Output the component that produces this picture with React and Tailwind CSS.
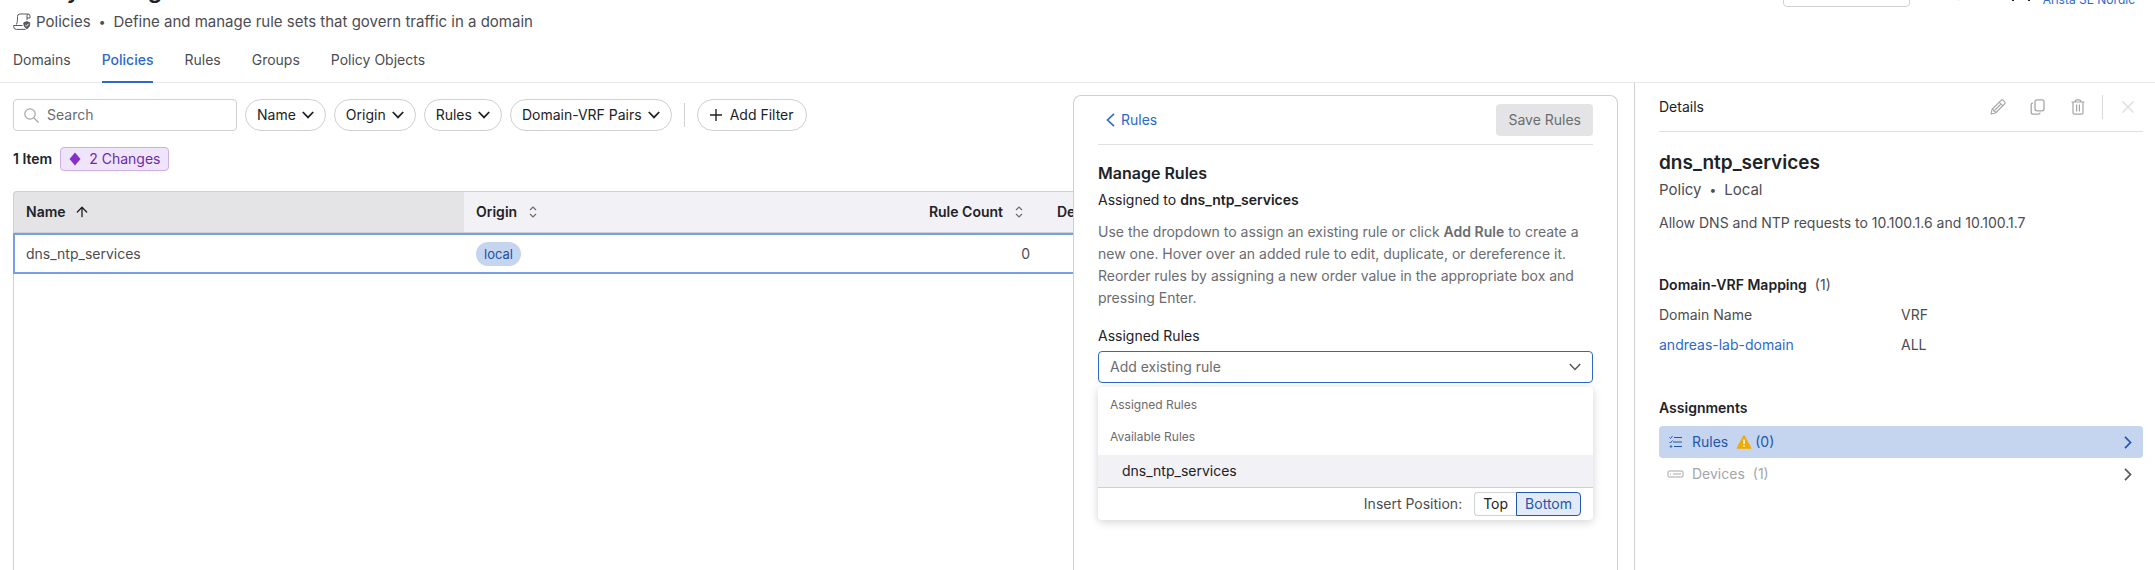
import React from 'react';
import { ArrowUp } from 'lucide-react';

const tabs = ['Domains', 'Policies', 'Rules', 'Groups', 'Policy Objects'];
const filters = ['Name', 'Origin', 'Rules', 'Domain-VRF Pairs'];

function PolicyIcon() {
    return (
        <svg width="18" height="18" viewBox="0 0 18 18" fill="none" stroke="#57585c" strokeWidth="1" className="shrink-0">
            <path d="M3.5 11.5c.9-2 1-4 1-8A2.4 2.4 0 0 1 6.9 1H15a2 2 0 0 1 2 2v2h-3" />
            <path d="M14 7V3a2 2 0 0 1 1-2M9.5 12.5H.7v1.3a2.6 2.6 0 0 0 2.6 2.6h9.2" />
            <path d="M10.8 9.8 13.8 8.6l3 1.2c0 3-.9 4.7-3 5.9-2.1-1.2-3-2.9-3-5.9z" fill="#57585c" />
            <path d="m12.3 12 1.2 1.2 2-2.4" stroke="#fff" />
        </svg>
    );
}

function SearchIcon() {
    return (
        <svg width="15" height="15" viewBox="0 0 15 15" fill="none" stroke="#a5a6aa" strokeWidth="1.2" className="shrink-0">
            <circle cx="6" cy="6" r="5.2" />
            <path d="m10 10 4.5 4.5" />
        </svg>
    );
}

function SortIcon() {
    return (
        <svg width="8" height="12" viewBox="0 0 8 12" fill="none" stroke="#6b6c70" strokeWidth="1.2">
            <path d="M1 4 4 1l3 3M1 8l3 3 3-3" />
        </svg>
    );
}

function DownIcon({ strokeWidth = 1.8 }) {
    return (
        <svg width="12" height="8" viewBox="0 0 12 8" fill="none" stroke="currentColor" strokeWidth={strokeWidth} className="shrink-0">
            <path d="m.8 1 5.2 5.4L11.2 1" />
        </svg>
    );
}

function RightIcon() {
    return (
        <svg width="8" height="13" viewBox="0 0 8 13" fill="none" stroke="currentColor" strokeWidth="1.7">
            <path d="m1 .9 5.5 5.6L1 12.1" />
        </svg>
    );
}

function PageHeader() {
    return (
        <header className="-mt-7 flex items-start justify-between px-[13px]">
            <div>
                <h1 className="h-9 text-[23px] leading-9 font-semibold text-[#212226]">Policy Manager</h1>
                <div className="flex h-7 items-center gap-[5px] text-[15px] text-[#4c4d52]">
                    <PolicyIcon />
                    <span className="flex items-center gap-2">
                        <span>Policies</span>
                        <span className="text-xs">•</span>
                        <span>Define and manage rule sets that govern traffic in a domain</span>
                    </span>
                </div>
            </div>
            <div className="flex items-start pr-[7px]">
                <button type="button" aria-label="Time range" className="h-[35px] w-[127px] rounded border border-[#cfd0d4]" />
                <span className="ml-12 h-[29px] w-px bg-[#e0e0e3]" />
                <svg width="20" height="30" viewBox="0 0 20 30" fill="none" stroke="#212226" strokeWidth="2" className="mr-3 ml-[52px]">
                    <path d="M2 29V20a8 8 0 0 1 16 0v9" />
                    <circle cx="10" cy="6" r="4" />
                </svg>
                <a href="#account" className="mt-[18px] text-xs leading-5 text-[#2c69cb]">Arista SE Nordic</a>
            </div>
        </header>
    );
}

function Tabs() {
    return (
        <nav className="flex gap-[31px] border-b border-[#e8e8ea] px-[13px] pt-[7px]">
            {tabs.map((tab) => (
                <a
                    key={tab}
                    href="#tab"
                    className={
                        tab === 'Policies'
                            ? '-mb-px h-10 border-b-2 border-[#2c69cb] pt-[7px] font-medium text-[#2c69cb]'
                            : 'h-9 pt-[7px] text-[#4c4d52]'
                    }
                >
                    {tab}
                </a>
            ))}
        </nav>
    );
}

function FilterBar() {
    return (
        <div className="flex items-center gap-2">
            <label className="flex h-8 w-56 items-center gap-2 rounded border border-[#cfd0d4] px-2.5">
                <SearchIcon />
                <input type="text" placeholder="Search" aria-label="Search" className="w-full outline-none placeholder:text-[#6b6c70]" />
            </label>
            {filters.map((name) => (
                <button key={name} type="button" className="flex h-8 items-center gap-1.5 rounded-full border border-[#cfd0d4] px-[11px] text-[#212226]">
                    {name}
                    <DownIcon />
                </button>
            ))}
            <span className="mx-1 h-6 w-px bg-[#cfd0d4]" />
            <button type="button" className="flex h-8 items-center gap-2 rounded-full border border-[#cfd0d4] px-3 text-[#212226]">
                <svg width="12" height="12" viewBox="0 0 12 12" stroke="currentColor" strokeWidth="1.4">
                    <path d="M6 0v12M0 6h12" />
                </svg>
                Add Filter
            </button>
        </div>
    );
}

function PolicyTable() {
    return (
        <table className="h-full w-full table-fixed border-separate border-spacing-0">
            <thead>
                <tr className="h-[42px] text-left text-[#212226]">
                    <th className="w-[451px] rounded-tl border-t border-b border-l border-[#cfd0d4] bg-[#e4e4e6] px-3 font-semibold">
                        <span className="flex items-center gap-2">Name <ArrowUp size={16} strokeWidth={2} /></span>
                    </th>
                    <th className="w-[452px] border-y border-[#cfd0d4] bg-[#f2f1f6] px-3 font-semibold">
                        <span className="flex items-center gap-3">Origin <SortIcon /></span>
                    </th>
                    <th className="w-[129px] border-y border-[#cfd0d4] bg-[#f2f1f6] pr-[22px] font-semibold">
                        <span className="flex items-center justify-end gap-3 whitespace-nowrap">Rule Count <SortIcon /></span>
                    </th>
                    <th className="overflow-hidden border-y border-[#cfd0d4] bg-[#f2f1f6] pl-3 font-semibold whitespace-nowrap">De</th>
                </tr>
            </thead>
            <tbody>
                <tr className="h-[41px] text-[#4c4d52]">
                    <td className="border-y-2 border-l-2 border-[#7a9fe0] px-[11px]">dns_ntp_services</td>
                    <td className="border-y-2 border-[#7a9fe0] px-3">
                        <span className="inline-block rounded-full bg-[#c5d5f0] px-2 text-[13px] leading-6 text-[#2050a0]">local</span>
                    </td>
                    <td className="border-y-2 border-[#7a9fe0] pr-[15px] text-right">0</td>
                    <td className="border-y-2 border-[#7a9fe0]" />
                </tr>
                <tr>
                    <td className="border-l border-[#cfd0d4]" colSpan={4} />
                </tr>
            </tbody>
        </table>
    );
}

function RulePicker() {
    return (
        <div className="relative">
            <label htmlFor="existing-rule" className="block leading-5 text-[#212226]">Assigned Rules</label>
            <div className="mt-[5px] flex h-8 items-center rounded border border-[#2c69cb] px-[11px] text-[#57585c]">
                <input id="existing-rule" type="text" placeholder="Add existing rule" className="w-full outline-none placeholder:text-[#6b6c70]" />
                <DownIcon strokeWidth={1.5} />
            </div>
            <div className="absolute inset-x-0 top-full mt-1 rounded bg-white shadow-[0_2px_10px_rgba(0,0,0,0.18)]">
                <div className="px-3 pt-1 text-xs text-[#6b6c70]">
                    <p className="leading-7">Assigned Rules</p>
                    <p className="pt-1 pb-1 leading-7">Available Rules</p>
                </div>
                <button type="button" className="block h-8 w-full bg-[#f2f1f6] px-6 text-left text-[#212226]">dns_ntp_services</button>
                <div className="flex h-[33px] items-center justify-end border-t border-[#cfd0d4] px-3">
                    <span className="mr-3 text-[#4c4d52]">Insert Position:</span>
                    <button type="button" className="h-6 rounded-l border border-r-0 border-[#cfd0d4] px-2 text-[#212226]">Top</button>
                    <button type="button" className="h-6 rounded-r border border-[#2257ad] bg-[#e3eaf7] px-2 text-[#2257ad]">Bottom</button>
                </div>
            </div>
        </div>
    );
}

function ManageRules() {
    return (
        <section className="mt-3 mr-4 w-[545px] shrink-0 rounded-t-lg border border-b-0 border-[#cfd0d4] bg-white px-6">
            <div className="flex h-[49px] items-center justify-between border-b border-[#e0e0e3]">
                <button type="button" className="flex items-center gap-1.5 px-2 text-[#2c69cb]">
                    <svg width="9" height="14" viewBox="0 0 9 14" fill="none" stroke="currentColor" strokeWidth="1.6">
                        <path d="M8 .8 1.5 7 8 13.2" />
                    </svg>
                    Rules
                </button>
                <button type="button" disabled className="h-8 rounded bg-[#e4e4e6] px-3 text-[#6b6c70]">Save Rules</button>
            </div>
            <h2 className="mt-4 text-base leading-6 font-semibold text-[#212226]">Manage Rules</h2>
            <p className="mt-[3px] leading-6 text-[#212226]">Assigned to <strong className="font-semibold">dns_ntp_services</strong></p>
            <p className="mt-[9px] mb-[17px] leading-[22px] text-[#6b6c70]">
                Use the dropdown to assign an existing rule or click <strong className="font-semibold">Add Rule</strong> to create a new one. Hover over an added rule to edit, duplicate, or dereference it. Reorder rules by assigning a new order value in the appropriate box and pressing Enter.
            </p>
            <RulePicker />
        </section>
    );
}

function DetailsPanel() {
    return (
        <aside className="w-[521px] shrink-0 border-l border-[#cfd0d4] pr-3 pl-6 text-[#4c4d52]">
            <div className="flex h-[49px] items-center justify-between border-b border-[#e0e0e3]">
                <span className="text-[#212226]">Details</span>
                <div className="flex items-center pr-[9px] text-[#a5a6aa]">
                    <button type="button" aria-label="Edit">
                        <svg width="16" height="16" viewBox="0 0 16 16" fill="none" stroke="currentColor" strokeWidth="1.1" strokeLinejoin="round">
                            <path d="M1 15l1-4.5L11 1.4a1.6 1.6 0 0 1 2.2 0L14.6 2.8a1.6 1.6 0 0 1 0 2.2L5.5 14zM9.2 3.2l3.6 3.6M2 10.5c1.2-.2 1.8.4 1.7 1.8 1.3-.1 2 .5 1.8 1.7M4.5 11.5l6-6" />
                        </svg>
                    </button>
                    <button type="button" aria-label="Duplicate" className="ml-6">
                        <svg width="16" height="16" viewBox="0 0 16 16" fill="none" stroke="currentColor" strokeWidth="1.3">
                            <rect x="5" y="0.8" width="9" height="11" rx="2" />
                            <path d="M2.8 4C1.8 4.2 1.2 5 1.2 6v7.2a2 2 0 0 0 2 2h5c1 0 1.8-.6 2-1.6" />
                        </svg>
                    </button>
                    <button type="button" aria-label="Delete" className="ml-6">
                        <svg width="16" height="16" viewBox="0 0 16 16" fill="none" stroke="currentColor" strokeWidth="1.2">
                            <path d="M1.5 3h13M5 3c0-1.4.8-2.2 2-2.2h2c1.2 0 2 .8 2 2.2M3 3v10.5a1.7 1.7 0 0 0 1.7 1.7h6.6a1.7 1.7 0 0 0 1.7-1.7V3M6.6 5.5v7M9.4 5.5v7" />
                        </svg>
                    </button>
                    <span className="mr-[19px] ml-4 h-6 w-px bg-[#d8d8db]" />
                    <button type="button" aria-label="Close" className="text-[#dcdcde]">
                        <svg width="12" height="12" viewBox="0 0 12 12" stroke="currentColor" strokeWidth="1.3">
                            <path d="m.5.5 11 11M11.5.5l-11 11" />
                        </svg>
                    </button>
                </div>
            </div>
            <h2 className="mt-4 text-[19px] leading-[30px] font-semibold text-[#212226]">dns_ntp_services</h2>
            <p className="flex items-center gap-2 text-[15px] leading-6"><span>Policy</span><span className="text-xs">•</span><span>Local</span></p>
            <p className="mt-[9px] leading-6">Allow DNS and NTP requests to 10.100.1.6 and 10.100.1.7</p>

            <h3 className="mt-9 leading-7"><span className="mr-2 font-semibold text-[#212226]">Domain-VRF Mapping</span>(1)</h3>
            <table className="mt-px w-full table-fixed text-left">
                <thead>
                    <tr className="h-[30px]"><th className="font-normal">Domain Name</th><th className="font-normal">VRF</th></tr>
                </thead>
                <tbody>
                    <tr className="h-[30px]"><td><a href="#domain" className="text-[#2c69cb]">andreas-lab-domain</a></td><td>ALL</td></tr>
                </tbody>
            </table>

            <h3 className="mt-9 mb-1.5 leading-6 font-semibold text-[#212226]">Assignments</h3>
            <button type="button" className="flex h-8 w-full items-center rounded bg-[#c5d5f0] px-2 text-[#2257ad]">
                <svg width="18" height="14" viewBox="0 0 18 14" fill="none" stroke="currentColor" strokeWidth="1">
                    <path d="M7 2.5h8M6 7h9M7 11.5h8M2.5 2.5l1 1 2-2.5M2.5 7l1 1 2-2.5" />
                    <circle cx="4" cy="11.5" r=".8" />
                </svg>
                <span className="ml-[7px]">Rules</span>
                <svg className="ml-2 shrink-0" width="16" height="16" viewBox="0 0 16 16">
                    <path d="M8 1.2 15 14.2H1z" fill="#f0ab00" stroke="#f0ab00" strokeWidth="1" strokeLinejoin="round" />
                    <path d="M8 5.5v4.5M8 11.3v1.5" stroke="#fff" strokeWidth="1.5" />
                </svg>
                <span className="ml-[3px]">(0)</span>
                <span className="mr-[3px] ml-auto"><RightIcon /></span>
            </button>
            <button type="button" className="flex h-8 w-full items-center px-2 text-[#a5a6aa]">
                <svg width="18" height="14" viewBox="0 0 18 14" fill="none" stroke="currentColor" strokeWidth="1">
                    <rect x="1" y="4" width="15" height="6" rx="1" />
                    <path d="M6 7h8M3 7h1" />
                </svg>
                <span className="ml-[7px]">Devices</span>
                <span className="ml-2">(1)</span>
                <span className="mr-[3px] ml-auto text-[#57585c]"><RightIcon /></span>
            </button>
        </aside>
    );
}

export default function App() {
    return (
        <div className="flex h-screen flex-col overflow-hidden bg-white font-['Inter',sans-serif] text-sm">
            <PageHeader />
            <Tabs />
            <div className="flex min-h-0 flex-1">
                <main className="flex min-w-0 flex-1 flex-col pt-4 pl-[13px]">
                    <FilterBar />
                    <div className="mt-4 flex h-6 items-center gap-2">
                        <span className="font-semibold text-[#212226]">1 Item</span>
                        <button type="button" className="flex h-6 items-center gap-2 rounded border border-[#cdaee8] bg-[#f0e4fa] px-2 text-[#6d2ba8]">
                            <svg width="12" height="14" viewBox="0 0 12 14"><path d="M6 .5 11.5 7 6 13.5.5 7z" fill="#8330c8" /></svg>
                            2 Changes
                        </button>
                    </div>
                    <div className="mt-5 min-h-0 flex-1">
                        <PolicyTable />
                    </div>
                </main>
                <ManageRules />
                <DetailsPanel />
            </div>
        </div>
    );
}
